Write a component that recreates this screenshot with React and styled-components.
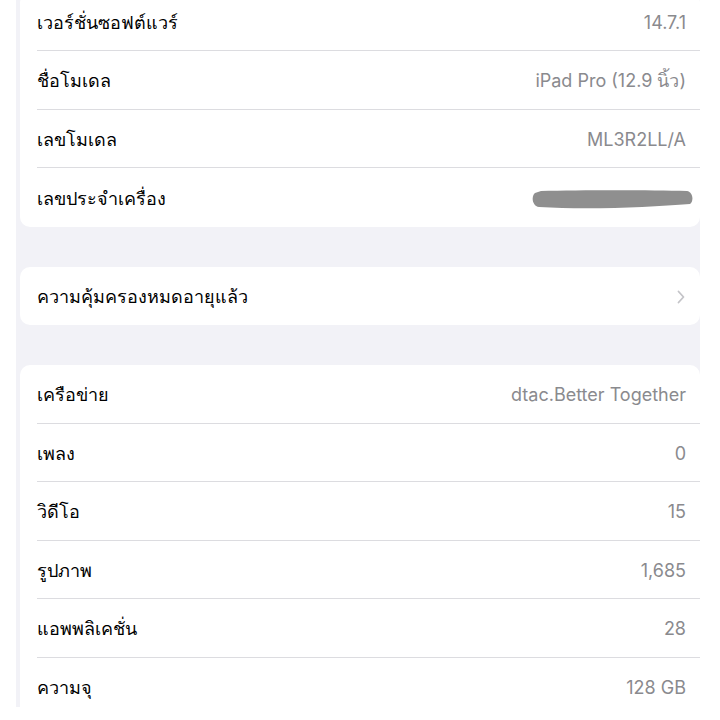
import styled, { createGlobalStyle } from 'styled-components'

const GlobalStyle = createGlobalStyle`
  html, body {
    margin: 0;
    padding: 0;
    background: #fff;
    font-family: 'Inter', 'Noto Sans', sans-serif;
  }
`

const groups = [
  [
    { label: 'เวอร์ชั่นซอฟต์แวร์', value: '14.7.1' },
    { label: 'ชื่อโมเดล', value: 'iPad Pro (12.9 นิ้ว)' },
    { label: 'เลขโมเดล', value: 'ML3R2LL/A' },
    { label: 'เลขประจำเครื่อง', hidden: true },
  ],
  [{ label: 'ความคุ้มครองหมดอายุแล้ว', chevron: true }],
  [
    { label: 'เครือข่าย', value: 'dtac.Better Together' },
    { label: 'เพลง', value: '0' },
    { label: 'วิดีโอ', value: '15' },
    { label: 'รูปภาพ', value: '1,685' },
    { label: 'แอพพลิเคชั่น', value: '28' },
    { label: 'ความจุ', value: '128 GB' },
  ],
]

// serial number is blacked out in the screenshot
function Scribble() {
  return (
    <Redacted width="162" height="23" viewBox="0 0 162 23">
      <path
        d="M10 4 C50 3 120 3 156 4 C162 5 163 14 159 17 C120 20 60 23 8 20 C1 19 0 9 4 6 Z"
        fill="#8f8f8f"
      />
    </Redacted>
  )
}

function Chevron() {
  return (
    <ChevronSvg width="8" height="14" viewBox="0 0 8 14">
      <path d="M1.5 1.5 L6.5 7 L1.5 12.5" stroke="#c4c4c8" strokeWidth="1.8" fill="none" strokeLinecap="round" strokeLinejoin="round" />
    </ChevronSvg>
  )
}

export default function App() {
  return (
    <>
      <GlobalStyle />
      <Page>
        <Panel>
          {groups.map((rows, i) => (
            <Card key={i}>
              {rows.map((row) => (
                <Row key={row.label}>
                  <Label>{row.label}</Label>
                  {row.value && <Value>{row.value}</Value>}
                  {row.hidden && <Scribble />}
                  {row.chevron && <Chevron />}
                </Row>
              ))}
            </Card>
          ))}
        </Panel>
      </Page>
    </>
  )
}

const Page = styled.div`
  width: 720px;
  height: 707px;
  overflow: hidden;
  background: #fff;
`

const Panel = styled.div`
  margin: -7.5px 20px 0 16px;
  padding: 0 0 48px 4px;
  background: #f2f2f7;
  display: flex;
  flex-direction: column;
  gap: 40px;
`

const Card = styled.div`
  background: #fff;
  border-radius: 10px;
  padding-left: 17px;
`

const Row = styled.div`
  height: 58.5px;
  box-sizing: border-box;
  display: flex;
  align-items: center;
  justify-content: space-between;
  padding: 2px 14px 0 0;
  border-bottom: 1px solid #dcdce0;
  &:last-child {
    border-bottom: none;
  }
`

const Label = styled.span`
  font-size: 18px;
  color: #000;
`

const Value = styled.span`
  font-size: 18px;
  color: #8a8a8e;
  font-weight: 400;
`

const Redacted = styled.svg`
  margin-right: -7px;
  margin-top: 1px;
`

const ChevronSvg = styled.svg`
  margin-right: 1px;
`
